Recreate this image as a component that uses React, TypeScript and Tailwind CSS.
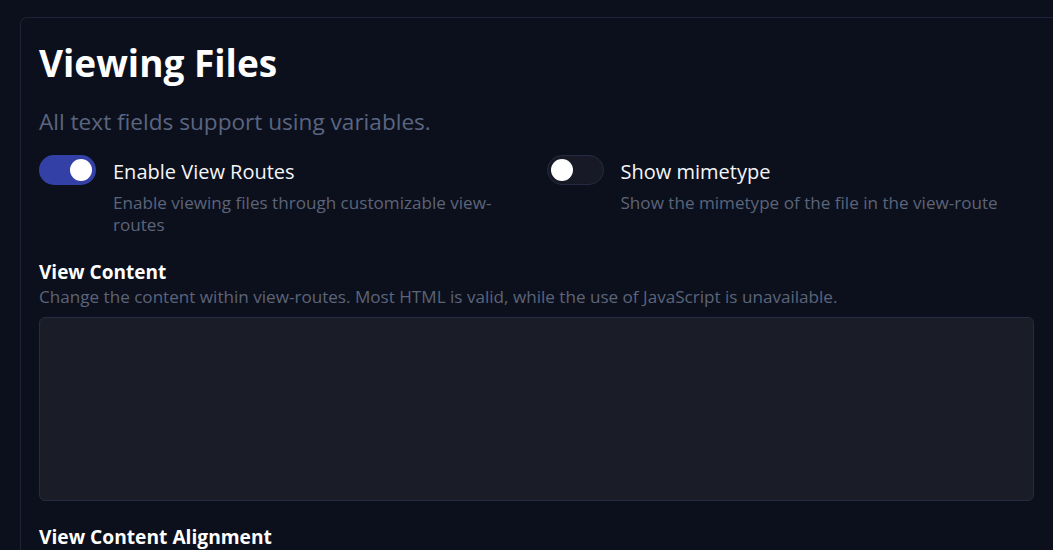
import React from "react";

function Toggle({ on }: { on: boolean }) {
  return on ? (
    <div className="relative h-[30px] w-[57px] shrink-0 rounded-full bg-[#3341a6]">
      <div className="absolute right-[4px] top-[4px] h-[22px] w-[22px] rounded-full bg-white" />
    </div>
  ) : (
    <div className="relative h-[30px] w-[57px] shrink-0 rounded-full border border-[#252a3e] bg-[#171a26]">
      <div className="absolute left-[3px] top-[3px] h-[22px] w-[22px] rounded-full bg-white" />
    </div>
  );
}

function SwitchField({ on, label, desc }: { on: boolean; label: string; desc: string }) {
  return (
    <div className="flex items-start gap-[17px]">
      <Toggle on={on} />
      <div className="flex flex-col">
        <div className="pt-[2px] text-[20px] leading-[30px] text-[#f5f6f8]">{label}</div>
        <div className="mt-[5px] text-[17.1px] leading-[22px] text-[#5c6479]">{desc}</div>
      </div>
    </div>
  );
}

export default function App() {
  return (
    <div
      className="h-[550px] w-[1053px] overflow-hidden bg-[#0c101c] pl-[20px] pt-[17px]"
      style={{ fontFamily: '"Open Sans", "Noto Sans", sans-serif' }}
    >
      <div className="w-[1040px] rounded-t-[7px] border border-b-0 border-[#1e2337] px-[18px] pt-[20px]">
        <h1 className="text-[37px] font-bold leading-[50px] text-white">Viewing Files</h1>
        <p className="mt-[19px] text-[22.6px] leading-[30px] text-[#5a6580]">
          All text fields support using variables.
        </p>
        <div className="mt-[18px] grid w-[995px] grid-cols-2 gap-x-[20px]">
          <SwitchField
            on={true}
            label="Enable View Routes"
            desc="Enable viewing files through customizable view-routes"
          />
          <SwitchField
            on={false}
            label="Show mimetype"
            desc="Show the mimetype of the file in the view-route"
          />
        </div>
        <div className="mt-[22px] w-[995px]">
          <div className="pt-[1px] text-[19px] font-bold leading-[26px] text-white">View Content</div>
          <div className="text-[17.1px] leading-[24px] text-[#5c6479]">
            Change the content within view-routes. Most HTML is valid, while the use of JavaScript is unavailable.
          </div>
          <div className="mt-[8px] h-[184px] w-full rounded-[6px] border border-[#252b42] bg-[#1a1d28]" />
          <div className="mt-[23px] text-[19.2px] font-bold leading-[26px] text-white">View Content Alignment</div>
        </div>
      </div>
    </div>
  );
}
